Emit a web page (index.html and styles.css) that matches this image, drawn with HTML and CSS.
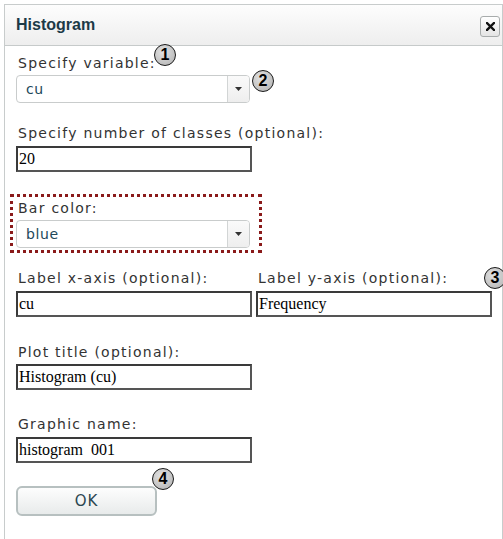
FILE: index.html
```html
<!DOCTYPE html>
<html lang="en">
<head>
<meta charset="utf-8">
<title>Histogram</title>
<link rel="stylesheet" href="styles.css">
</head>
<body>
<div class="dialog">
  <div class="titlebar">
    <h1 class="title">Histogram</h1>
    <button class="close" type="button" aria-label="Close">
      <svg width="9" height="9" viewBox="0 0 9 9"><path d="M1 1 L8 8 M8 1 L1 8" stroke="#111" stroke-width="2.4" stroke-linecap="square"/></svg>
    </button>
  </div>

  <div class="content">
    <div class="field first">
      <span class="label">Specify variable:</span>
      <div class="select">
        <span class="select-value">cu</span>
        <span class="select-arrow"><svg width="7" height="4" viewBox="0 0 7 4"><path d="M0 0 H7 L3.5 4 Z" fill="#333"/></svg></span>
      </div>
    </div>

    <div class="field classes">
      <span class="label">Specify number of classes (optional):</span>
      <input class="text-input" type="text" value="20">
    </div>

    <div class="highlight">
      <span class="label">Bar color:</span>
      <div class="select">
        <span class="select-value">blue</span>
        <span class="select-arrow"><svg width="7" height="4" viewBox="0 0 7 4"><path d="M0 0 H7 L3.5 4 Z" fill="#333"/></svg></span>
      </div>
    </div>

    <div class="axis-row">
      <div class="field">
        <span class="label">Label x-axis (optional):</span>
        <input class="text-input" type="text" value="cu">
      </div>
      <div class="field">
        <span class="label">Label y-axis (optional):</span>
        <input class="text-input" type="text" value="Frequency">
      </div>
    </div>

    <div class="field plot-title">
      <span class="label">Plot title (optional):</span>
      <input class="text-input" type="text" value="Histogram (cu)">
    </div>

    <div class="field graphic-name">
      <span class="label">Graphic name:</span>
      <input class="text-input" type="text" value="histogram  001">
    </div>

    <button class="ok" type="button">OK</button>
  </div>

  <span class="badge b1">1</span>
  <span class="badge b2">2</span>
  <span class="badge b3">3</span>
  <span class="badge b4">4</span>
</div>
</body>
</html>
```

FILE: styles.css
```css
html, body {
  margin: 0;
  overflow: hidden;
  background: #fff;
}

body {
  padding: 4px 0 0 4px;
  font-family: "DejaVu Sans", Verdana, sans-serif;
}

/* dialog frame */
.dialog {
  position: relative;
  width: 499px;
  height: 560px;
  box-sizing: border-box;
  border: 1px solid #c8cccc;
  border-bottom: none;
  background: #fff;
}

.titlebar {
  height: 40px;
  display: flex;
  align-items: center;
  justify-content: space-between;
  padding: 0 2px 0 11px;
  background: linear-gradient(#fdfdfd, #eeeeee);
  border-bottom: 1px solid #c6caca;
}

.title {
  margin: 0;
  font: bold 16px/18px "Liberation Sans", Arial, sans-serif;
  color: #1c3a47;
}

.close {
  width: 20px;
  height: 21px;
  padding: 0;
  margin-top: 3px;
  display: flex;
  align-items: center;
  justify-content: center;
  border: 1px solid #a8acac;
  border-radius: 3px;
  background: linear-gradient(#ffffff, #e4e4e4);
}

/* form body */
.content {
  padding: 9px 0 0 11px;
}

.field {
  display: flex;
  flex-direction: column;
  align-items: flex-start;
}

.label {
  display: block;
  padding-left: 2px;
  font-size: 14px;
  line-height: 16px;
  letter-spacing: 1.25px;
  color: #333;
  margin-bottom: 5px;
}

.field.first .label,
.highlight .label {
  margin-bottom: 4px;
}

.classes { margin-top: 22px; }
.axis-row { margin-top: 17px; display: flex; gap: 4px; }
.plot-title { margin-top: 27px; }
.plot-title .label { margin-bottom: 4px; }
.graphic-name { margin-top: 26px; }

/* dropdowns */
.select {
  width: 234px;
  height: 28px;
  box-sizing: border-box;
  display: flex;
  border: 1px solid #c9cccc;
  border-radius: 4px;
  background: #fff;
  overflow: hidden;
}

.select-value {
  flex: 1;
  padding-left: 9px;
  font-size: 14px;
  line-height: 26px;
  letter-spacing: 0.6px;
  color: #22485a;
}

.select-arrow {
  width: 21px;
  display: flex;
  align-items: center;
  justify-content: center;
  border-left: 1px solid #d2d5d5;
  background: linear-gradient(#fafafa, #eeeeee);
}

/* plain text inputs */
.text-input {
  width: 236px;
  height: 26px;
  box-sizing: border-box;
  margin: 0;
  padding: 0 1px;
  border: 2px solid #444;
  border-color: #3a3a3a #555 #555 #3a3a3a;
  font: 16px "Liberation Serif", "Times New Roman", serif;
  color: #000;
  background: #fff;
}

/* dotted highlight around the colour chooser */
.highlight {
  width: 252px;
  box-sizing: border-box;
  margin: 22px 0 0 -6px;
  padding: 3px 0 2px 3px;
  border: 3px dotted #8a1a1a;
}

.ok {
  display: block;
  margin-top: 23px;
  width: 141px;
  height: 30px;
  border: 2px solid #b7c0c0;
  border-radius: 6px;
  background: linear-gradient(#fdfdfd, #e8ebeb);
  font: 15px "DejaVu Sans", Verdana, sans-serif;
  letter-spacing: 1px;
  color: #2b4651;
}

/* numbered callouts */
.badge {
  position: absolute;
  width: 22px;
  height: 22px;
  box-sizing: border-box;
  border: 1.5px solid #1a1a1a;
  border-radius: 50%;
  background: radial-gradient(circle at 40% 35%, #e2e2e2, #b0b0b0);
  font: bold 16px/19px "Liberation Sans", Arial, sans-serif;
  color: #000;
  text-align: center;
}

.b1 { left: 149px; top: 39px; }
.b2 { left: 247px; top: 65px; }
.b3 { left: 479px; top: 262px; }
.b4 { left: 147px; top: 463px; }
```
